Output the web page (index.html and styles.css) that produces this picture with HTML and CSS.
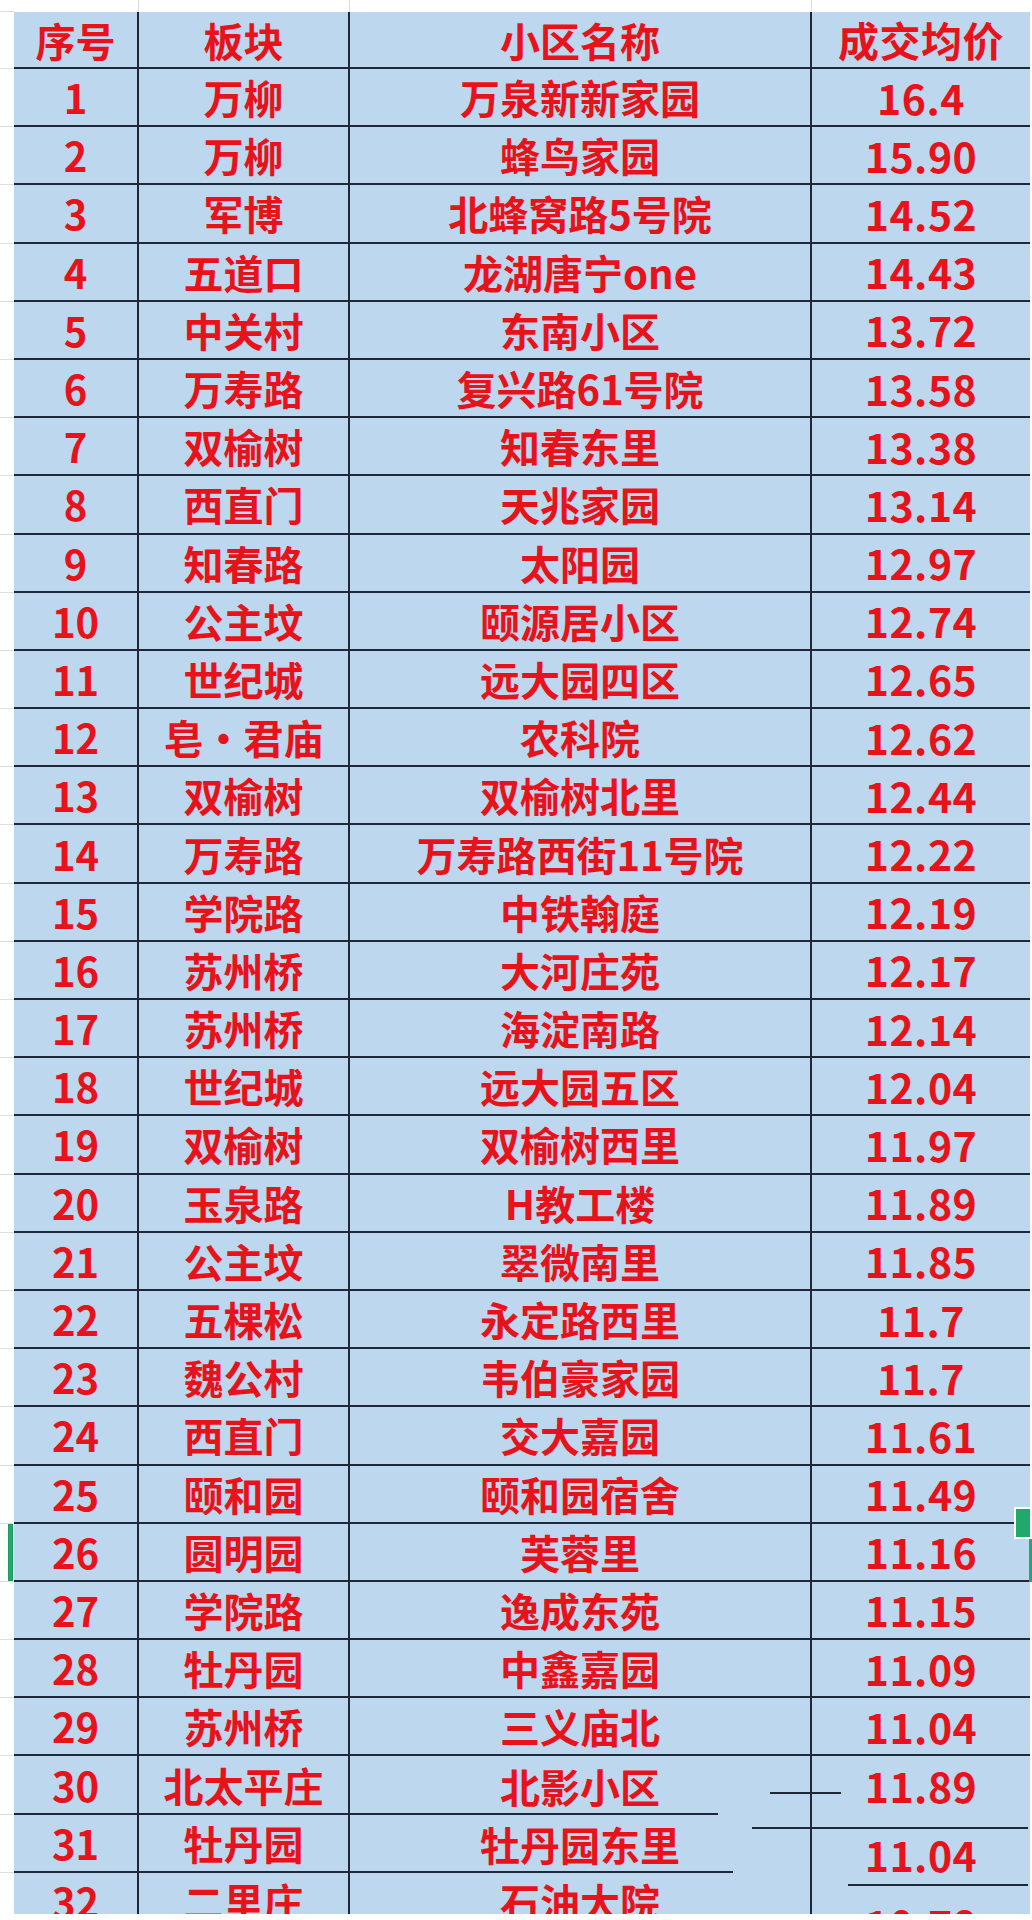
FILE: index.html
```html
<!DOCTYPE html>
<html lang="zh-CN">
<head>
<meta charset="utf-8">
<title>成交均价</title>
<link rel="stylesheet" href="styles.css">
</head>
<body>
<div class="sheet">
  <div class="top g"></div><div class="top"></div><div class="top"></div><div class="top"></div><div class="top last"></div>

  <div class="gut"></div><div class="c c1 h">序号</div><div class="c c2 h">板块</div><div class="c c3 h">小区名称</div><div class="c c4 h">成交均价</div>

  <div class="gut"></div><div class="c c1">1</div><div class="c c2">万柳</div><div class="c c3">万泉新新家园</div><div class="c c4">16.4</div>
  <div class="gut"></div><div class="c c1">2</div><div class="c c2">万柳</div><div class="c c3">蜂鸟家园</div><div class="c c4">15.90</div>
  <div class="gut"></div><div class="c c1">3</div><div class="c c2">军博</div><div class="c c3">北蜂窝路5号院</div><div class="c c4">14.52</div>
  <div class="gut"></div><div class="c c1">4</div><div class="c c2">五道口</div><div class="c c3">龙湖唐宁one</div><div class="c c4">14.43</div>
  <div class="gut"></div><div class="c c1">5</div><div class="c c2">中关村</div><div class="c c3">东南小区</div><div class="c c4">13.72</div>
  <div class="gut"></div><div class="c c1">6</div><div class="c c2">万寿路</div><div class="c c3">复兴路61号院</div><div class="c c4">13.58</div>
  <div class="gut"></div><div class="c c1">7</div><div class="c c2">双榆树</div><div class="c c3">知春东里</div><div class="c c4">13.38</div>
  <div class="gut"></div><div class="c c1">8</div><div class="c c2">西直门</div><div class="c c3">天兆家园</div><div class="c c4">13.14</div>
  <div class="gut"></div><div class="c c1">9</div><div class="c c2">知春路</div><div class="c c3">太阳园</div><div class="c c4">12.97</div>
  <div class="gut"></div><div class="c c1">10</div><div class="c c2">公主坟</div><div class="c c3">颐源居小区</div><div class="c c4">12.74</div>
  <div class="gut"></div><div class="c c1">11</div><div class="c c2">世纪城</div><div class="c c3">远大园四区</div><div class="c c4">12.65</div>
  <div class="gut"></div><div class="c c1">12</div><div class="c c2">皂・君庙</div><div class="c c3">农科院</div><div class="c c4">12.62</div>
  <div class="gut"></div><div class="c c1">13</div><div class="c c2">双榆树</div><div class="c c3">双榆树北里</div><div class="c c4">12.44</div>
  <div class="gut"></div><div class="c c1">14</div><div class="c c2">万寿路</div><div class="c c3">万寿路西街11号院</div><div class="c c4">12.22</div>
  <div class="gut"></div><div class="c c1">15</div><div class="c c2">学院路</div><div class="c c3">中铁翰庭</div><div class="c c4">12.19</div>
  <div class="gut"></div><div class="c c1">16</div><div class="c c2">苏州桥</div><div class="c c3">大河庄苑</div><div class="c c4">12.17</div>
  <div class="gut"></div><div class="c c1">17</div><div class="c c2">苏州桥</div><div class="c c3">海淀南路</div><div class="c c4">12.14</div>
  <div class="gut"></div><div class="c c1">18</div><div class="c c2">世纪城</div><div class="c c3">远大园五区</div><div class="c c4">12.04</div>
  <div class="gut"></div><div class="c c1">19</div><div class="c c2">双榆树</div><div class="c c3">双榆树西里</div><div class="c c4">11.97</div>
  <div class="gut"></div><div class="c c1">20</div><div class="c c2">玉泉路</div><div class="c c3">H教工楼</div><div class="c c4">11.89</div>
  <div class="gut"></div><div class="c c1">21</div><div class="c c2">公主坟</div><div class="c c3">翠微南里</div><div class="c c4">11.85</div>
  <div class="gut"></div><div class="c c1">22</div><div class="c c2">五棵松</div><div class="c c3">永定路西里</div><div class="c c4">11.7</div>
  <div class="gut"></div><div class="c c1">23</div><div class="c c2">魏公村</div><div class="c c3">韦伯豪家园</div><div class="c c4">11.7</div>
  <div class="gut"></div><div class="c c1">24</div><div class="c c2">西直门</div><div class="c c3">交大嘉园</div><div class="c c4">11.61</div>
  <div class="gut"></div><div class="c c1">25</div><div class="c c2">颐和园</div><div class="c c3">颐和园宿舍</div><div class="c c4">11.49</div>
  <div class="gut sel"><span class="selbar"></span></div><div class="c c1">26</div><div class="c c2">圆明园</div><div class="c c3">芙蓉里</div><div class="c c4">11.16</div>
  <div class="gut"></div><div class="c c1">27</div><div class="c c2">学院路</div><div class="c c3">逸成东苑</div><div class="c c4">11.15</div>
  <div class="gut"></div><div class="c c1">28</div><div class="c c2">牡丹园</div><div class="c c3">中鑫嘉园</div><div class="c c4">11.09</div>
  <div class="gut"></div><div class="c c1">29</div><div class="c c2">苏州桥</div><div class="c c3">三义庙北</div><div class="c c4">11.04</div>
  <div class="gut"></div><div class="c c1">30</div><div class="c c2">北太平庄</div><div class="c c3 cut30">北影小区</div><div class="c c4 shift30">11.89</div>
  <div class="gut"></div><div class="c c1">31</div><div class="c c2">牡丹园</div><div class="c c3 cut31">牡丹园东里</div><div class="c c4 shift31">11.04</div>
  <div class="gut"></div><div class="c c1">32</div><div class="c c2">二里庄</div><div class="c c3">石油大院</div><div class="c c4 last32">10.78</div>

  <span class="handle"></span>
  <span class="selline"></span>
</div>
</body>
</html>
```
FILE: styles.css
```css
html, body {
  margin: 0;
  padding: 0;
  background: #ffffff;
}

.sheet {
  position: relative;
  display: grid;
  grid-template-columns: 14px 125px 211px 462px 218px;
  grid-template-rows: 12px 57px repeat(32, 58.2px);
  height: 1914px;
  overflow: hidden;
  font-family: "Noto Sans CJK SC", "Noto Sans", sans-serif;
  font-weight: 700;
  color: #e8121a;
}

.top {
  background: #ffffff;
  border-right: 1px solid #dcdcdc;
  box-sizing: border-box;
}
.top.g {
  border-right: none;
  border-bottom: 1px solid #dcdcdc;
}
.top.last {
  border-right: none;
}

.gut {
  background: #ffffff;
  border-bottom: 1px solid #dedede;
  box-sizing: border-box;
  display: flex;
}
.gut.sel {
  padding-left: 8px;
}
.selbar {
  width: 5px;
  height: 100%;
  background: #21a96b;
  border: 1px solid #1a9a5f;
  box-sizing: border-box;
}

.c {
  position: relative;
  background: #bdd7ee;
  box-sizing: border-box;
  display: flex;
  align-items: center;
  justify-content: center;
  font-size: 40px;
  line-height: 1;
  white-space: nowrap;
  border-bottom: 2px solid #1f2838;
}
.c1, .c2, .c3 {
  border-right: 2px solid #1f2838;
}
.c4 {
  letter-spacing: 0.5px;
  font-size: 41px;
}

/* distorted lines near the bottom of the screenshot */
.cut30, .cut31 {
  border-bottom: none;
}
.cut30::after, .cut31::after {
  content: "";
  position: absolute;
  left: 0;
  bottom: 0;
  height: 2px;
  background: #1f2838;
}
.cut30::after { width: 368px; }
.cut31::after { width: 383px; }
.cut30::before {
  content: "";
  position: absolute;
  right: -31px;
  bottom: 21px;
  width: 71px;
  height: 2px;
  background: #1f2838;
  z-index: 2;
}

.shift30, .shift31 {
  border-bottom: none;
  overflow: visible;
}
.shift30::after, .shift31::after {
  content: "";
  position: absolute;
  right: 2px;
  height: 2px;
  background: #1f2838;
  z-index: 2;
}
.shift30::after { left: -60px; bottom: -14px; }
.shift31::after { left: 36px; bottom: -13px; }
.shift31 {
  padding-top: 22px;
}
.last32 {
  padding-top: 46px;
}

.handle {
  position: absolute;
  left: 1014px;
  top: 1507px;
  width: 18px;
  height: 32px;
  background: #21a96b;
  border: 2px solid #ffffff;
  box-sizing: border-box;
  z-index: 3;
}
.selline {
  position: absolute;
  left: 1029px;
  top: 1539px;
  width: 3px;
  height: 43px;
  background: #21a96b;
  z-index: 3;
}
```
